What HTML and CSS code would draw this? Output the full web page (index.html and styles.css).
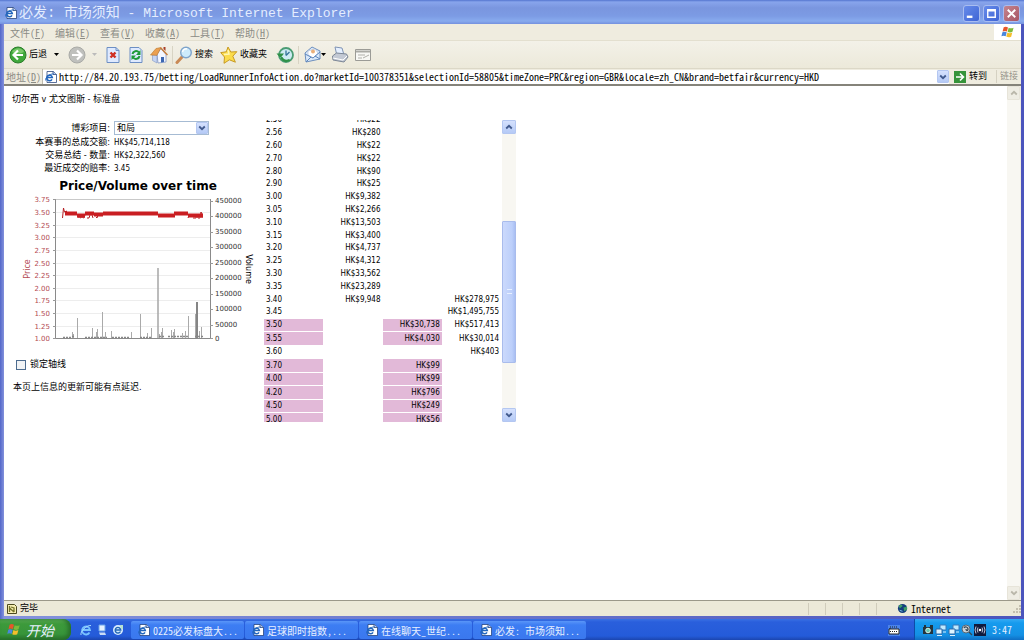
FILE: index.html
```html
<!DOCTYPE html>
<html lang="zh-CN">
<head>
<meta charset="utf-8">
<title>必发: 市场须知 - Microsoft Internet Explorer</title>
<link rel="stylesheet" href="styles.css">
</head>
<body>
<svg class="defs" aria-hidden="true">
  <symbol id="ie" viewBox="0 0 12 12">
    <path d="M2 .5h6.500l3 3v8H2z" fill="#fff" stroke="#16346f" stroke-width=".7"/>
    <path d="M8 .5v3h3.500" fill="#b9cdf3" stroke="#16346f" stroke-width=".7"/>
    <path d="M7 8.300A2.800 2.800 0 1 1 7.300 6.400H2" fill="none" stroke="#2266bd" stroke-width="1.500"/>
    <path d="M.4 9.500C0 6.500 5 2.500 8.500 3" fill="none" stroke="#2266bd" stroke-width=".9"/>
  </symbol>
  <symbol id="flag" viewBox="0 0 16 14">
    <path d="M3 1.500C5 .3 6.500.8 8 1.700L6.700 6.500C5 5.500 3.500 5.500 1.700 6.300z" fill="#e8562a"/>
    <path d="M8.800 2C10.500 3 12.500 3 14.500 2L13.200 6.800C11.300 7.800 9.300 7.600 7.500 6.800z" fill="#7dbb3a"/>
    <path d="M1.500 7.200C3.300 6.300 5 6.500 6.500 7.400L5.300 12C3.700 11 2 11 .3 11.900z" fill="#4a86dc"/>
    <path d="M7.300 7.700C9 8.600 11 8.700 13 7.700L11.700 12.400C9.700 13.400 7.800 13.200 6 12.300z" fill="#f4be2c"/>
  </symbol>
  <symbol id="down" viewBox="0 0 8 6"><path d="M1.200 1.500L4 4.200 6.800 1.500" fill="none" stroke="currentColor" stroke-width="1.800"/></symbol>
  <symbol id="up" viewBox="0 0 8 6"><path d="M1.200 4.500L4 1.800 6.800 4.500" fill="none" stroke="currentColor" stroke-width="1.800"/></symbol>
  <symbol id="net" viewBox="0 0 12 12">
    <path d="M5 1h6v5H5z" fill="#bfe9ff" stroke="#3b78b8"/><path d="M1 5h6v5H1z" fill="#dff5ff" stroke="#2c69a8"/><path d="M2 11.500h5M8 8h3" stroke="#d6efff"/>
  </symbol>
</svg>

<div class="window">
  <header class="titlebar">
    <svg class="i12"><use href="#ie"/></svg>
    <h1><span class="cjk">必发: 市场须知</span> - Microsoft Internet Explorer</h1>
    <div class="winbtns">
      <button aria-label="最小化"><svg viewBox="0 0 16 16"><path d="M3 11.500h6" stroke="#fff" stroke-width="2.500"/></svg></button>
      <button aria-label="最大化"><svg viewBox="0 0 16 16"><path d="M4 4h8v8H4zM4 5h8" stroke="#fff" stroke-width="1.500" fill="none"/></svg></button>
      <button class="close" aria-label="关闭"><svg viewBox="0 0 16 16"><path d="M4 4l8 8M12 4l-8 8" stroke="#fff" stroke-width="2"/></svg></button>
    </div>
  </header>

  <div class="chrome">
    <nav class="menubar">
      <button>文件(<u>F</u>)</button><button>编辑(<u>E</u>)</button><button>查看(<u>V</u>)</button><button>收藏(<u>A</u>)</button><button>工具(<u>T</u>)</button><button>帮助(<u>H</u>)</button>
      <div class="flagbox"><svg><use href="#flag"/></svg></div>
    </nav>

    <div class="toolbar">
      <button class="back"><svg class="i18" viewBox="0 0 18 18"><circle cx="9" cy="9" r="8" fill="#3fa83b" stroke="#2b7d2b"/><path d="M3 6C6 1 13 1 15 6 11 8 7 8 3 6z" fill="#92d57f" opacity=".7"/><path d="M14 9H5M9 4.500L4.500 9 9 13.500" fill="none" stroke="#fff" stroke-width="2.200"/></svg>后退<svg class="tri" viewBox="0 0 5 3"><path d="M0 0h5L2.500 3z"/></svg></button>
      <button class="fwd" aria-label="前进"><svg class="i18" viewBox="0 0 18 18"><circle cx="9" cy="9" r="8" fill="#bfc0bd" stroke="#a9aaa6"/><path d="M4 9h9M9 4.500L13.500 9 9 13.500" fill="none" stroke="#fff" stroke-width="2.200"/></svg><svg class="tri dim" viewBox="0 0 5 3"><path d="M0 0h5L2.500 3z"/></svg></button>
      <button aria-label="停止"><svg class="i18" viewBox="0 0 18 18"><path d="M3 1.500h9l3 3v12H3z" fill="#dfeaff" stroke="#6d8fc4"/><path d="M12 1.500v3h3" fill="none" stroke="#6d8fc4"/><path d="M6.500 6.500l5 5M11.500 6.500l-5 5" stroke="#cf2f22" stroke-width="2.400"/></svg></button>
      <button aria-label="刷新"><svg class="i18" viewBox="0 0 18 18"><path d="M3 1.500h9l3 3v12H3z" fill="#dfeaff" stroke="#6d8fc4"/><path d="M5.500 8C6 5 10 4 12 6.500M12.500 10C12 13 8 14 6 11.500" fill="none" stroke="#1e9a38" stroke-width="2"/><path d="M13.500 4v5H9zM4.500 14V9.500H9z" fill="#1e9a38"/></svg></button>
      <button class="home" aria-label="主页"><svg class="i18" viewBox="0 0 18 18"><path d="M7 8l4-5.500 5 6V16l-8 1z" fill="#f4f7ff" stroke="#8095c5" stroke-width=".8"/><path d="M2.500 9L7 9v8l-4.500-2.500z" fill="#c5d4f3" stroke="#8095c5" stroke-width=".6"/><path d="M.5 9L6 2.500l5-1L7 9.300z" fill="#eba050" stroke="#b9752d" stroke-width=".6"/><path d="M10.500 1.700L17.500 9" stroke="#c67c39" stroke-width="1.500"/><path d="M11 11h3v5l-3 .5z" fill="#3c67b1"/><path d="M13.500 1h2v4l-2-2z" fill="#a83f27"/></svg></button>
      <button class="search"><svg class="i18" viewBox="0 0 18 18"><path d="M7 11L2 16.500" stroke="#c98a56" stroke-width="3" stroke-linecap="round"/><circle cx="11" cy="6.500" r="5.300" fill="#cdebfc" stroke="#7fa4cb" stroke-width="1.400"/><path d="M7.500 6C8 3.500 10 2.500 12 3" stroke="#fff" stroke-width="1.500" fill="none"/></svg>搜索</button>
      <button class="fav"><svg class="i18" viewBox="0 0 18 18"><path d="M8 1l2.800 5 6-.3-4 4.500 2.600 6-6-2.400L4 17.300l.5-6.300L.7 6.600l5.600-.8z" fill="#fbdc4c" stroke="#c89a24"/><path d="M8 4l1 4-5 .5" fill="none" stroke="#fff6b5" stroke-width="1.500"/></svg>收藏夹</button>
      <button class="hist" aria-label="历史"><svg class="i18" viewBox="0 0 18 18"><circle cx="10" cy="9" r="7" fill="#cdebf3" stroke="#4a9c74" stroke-width="1.800"/><path d="M10 9.500V4.500M10 9.500l3.500-3.500" fill="none" stroke="#33739a" stroke-width="1.300"/><path d="M.5 7.500h7.500L4.500 12zM4 11C6 16.500 11 17 14.500 14.500L13 13C10 14.500 8 13.500 6.500 11z" fill="#2f9147"/></svg></button>
      <button class="mail" aria-label="邮件"><svg class="i18" viewBox="0 0 18 18"><path d="M2 7l7-6 8 4v8L3 16z" fill="#d8e8fa" stroke="#6d8fbd"/><path d="M5 5l7-2 3 4-5 5-5-3z" fill="#fff" stroke="#b9c6dc" stroke-width=".7"/><path d="M2 8l8 4 7-6M3 16l5-5M17 13l-5-3" fill="none" stroke="#5c86bd"/><circle cx="10" cy="5.500" r="2" fill="#eab07b"/></svg><svg class="tri" viewBox="0 0 5 3"><path d="M0 0h5L2.500 3z"/></svg></button>
      <button aria-label="打印"><svg class="i18" viewBox="0 0 18 18"><path d="M4 1l7 1 2 7-7 1z" fill="#e6f0ff" stroke="#8094b5"/><path d="M1.500 10l4-3 10 1 1.500 3-4 5-11-2z" fill="#c3c9d4" stroke="#7c8796"/><path d="M2 12l10 2 4-4" fill="none" stroke="#fff"/></svg></button>
      <button class="edit" aria-label="编辑"><svg class="i18" viewBox="0 0 18 18"><path d="M1.500 3.500h15v11h-15z" fill="#f8f8f5" stroke="#9b9b96"/><path d="M2 5.500h14" stroke="#aaaaa5" stroke-width="2"/><path d="M4 9h7M4 12h4M9 12l6-3" stroke="#b0b0ab"/></svg></button>
    </div>

    <form class="addressbar">
      <label for="url">地址(<u>D</u>)</label>
      <div class="urlbox">
        <svg class="i12"><use href="#ie"/></svg>
        <input id="url" type="text" value="http://84.20.193.75/betting/LoadRunnerInfoAction.do?marketId=100378351&amp;selectionId=58805&amp;timeZone=PRC&amp;region=GBR&amp;locale=zh_CN&amp;brand=betfair&amp;currency=HKD">
        <button type="button" class="drop" aria-label="展开"><svg><use href="#down"/></svg></button>
      </div>
      <button type="button" class="go"><svg viewBox="0 0 12 12"><path d="M0 0h12v12H0z" fill="#36943b"/><path d="M2 6h7M6 2.500L9.500 6 6 9.500" fill="none" stroke="#fff" stroke-width="1.600"/></svg>转到</button>
      <a class="links" href="#">链接</a>
    </form>
  </div>

  <div class="viewport">
    <main class="page">
      <h2>切尔西 v 尤文图斯 - 标准盘</h2>
      <div class="columns">
        <section class="info">
          <dl>
            <dt><label for="sel">博彩项目:</label></dt>
            <dd><span class="pick"><select id="sel"><option>和局</option></select><span class="arrow"><svg><use href="#down"/></svg></span></span></dd>
            <dt>本赛事的总成交额:</dt><dd>HK$45,714,118</dd>
            <dt>交易总结 - 数量:</dt><dd>HK$2,322,560</dd>
            <dt>最近成交的赔率:</dt><dd>3.45</dd>
          </dl>
          <svg class="chart" viewBox="0 0 246 172" role="img" aria-label="Price/Volume over time">
            <text class="ctitle" x="126" y="15" text-anchor="middle">Price/Volume over time</text>
            <path d="M44 37.500h154M44 50.500h154M44 62.500h154M44 75.500h154M44 88.500h154M44 100.500h154M44 113.500h154M44 125.500h154M44 138.500h154M44 151.500h154" stroke="#ededed"/>
            <path d="M43.500 24.500H198.500" stroke="#c9c9c9"/>
            <path d="M43.500 24v139.500h155V24" fill="none" stroke="#8a8a8a"/>
            <path d="M41 24.500h3M41 37.500h3M41 50.500h3M41 62.500h3M41 75.500h3M41 88.500h3M41 100.500h3M41 113.500h3M41 125.500h3M41 138.500h3M41 151.500h3M41 163.500h3M198 26.500h3M198 41.500h3M198 57.500h3M198 72.500h3M198 88.500h3M198 103.500h3M198 119.500h3M198 134.500h3M198 150.500h3M198 163.500h3" stroke="#999"/>
            <path d="M65.500 163v-20M90.500 163v-26M128.500 163v-24M176.500 163v-22M139.500 163v-10M80.500 163v-10M84.500 163v-6M85.500 163v-9M60.500 163v-6M61.500 163v-4M93.500 163v-6M99.500 163v-7M119.500 163v-6M135.500 163v-5M147.500 163v-4M149.500 163v-6M150.500 163v-10M159.500 163v-8M161.500 163v-6M162.500 163v-9M170.500 163v-5M173.500 163v-7M187.500 163v-7M189.500 163v-11" stroke="#aaa"/>
            <path d="M146 163V93" stroke="#a6a6a6" stroke-width="1.500"/>
            <path d="M185 163v-36" stroke="#858585" stroke-width="2"/><path d="M183.500 163v-24" stroke="#aaa"/>
            <path d="M51 162.500h8M60 161.500h3M73 162.500h22M100 162.500h18M128 162.500h12M147 161.500h5M156 161.500h11M168 161.500h8M183 161.500h9" stroke="#888" stroke-width="1.500" stroke-dasharray="2 1"/>
            <path d="M50.500 43l1-10 1 4 2-1v3M66 43l1-3 1 3 2-1 2 1 1-3M75 43h2l1-3M79 37l2 6M84 42l1 1 1-3M176 43l1-3M181 43h3l1-4 1 4h2l1-6 1 2v4" fill="none" stroke="#b51f23" stroke-width="1"/>
            <path d="M53 38.500h12M65 40.500h8M73 38.500h9M82 39.500h9M91 38.500h55M146 40.500h17M162 38.500h14M176 40.500h15" fill="none" stroke="#c91e22" stroke-width="4"/>
            <g class="price" text-anchor="end">
              <text x="38" y="27">3.75</text><text x="38" y="40">3.50</text><text x="38" y="53">3.25</text><text x="38" y="65">3.00</text><text x="38" y="78">2.75</text><text x="38" y="91">2.50</text><text x="38" y="103">2.25</text><text x="38" y="116">2.00</text><text x="38" y="128">1.75</text><text x="38" y="141">1.50</text><text x="38" y="154">1.25</text><text x="38" y="166">1.00</text>
            </g>
            <g class="vol">
              <text x="203" y="28">450000</text><text x="203" y="43">400000</text><text x="203" y="59">350000</text><text x="203" y="74">300000</text><text x="203" y="90">250000</text><text x="203" y="105">200000</text><text x="203" y="121">150000</text><text x="203" y="136">100000</text><text x="203" y="152">50000</text><text x="203" y="166">0</text>
            </g>
            <text class="axis price" transform="translate(18 94) rotate(-90)" text-anchor="middle">Price</text>
            <text class="axis" transform="translate(234 94) rotate(90)" text-anchor="middle">Volume</text>
          </svg>
          <label class="lock"><input type="checkbox">锁定轴线</label>
          <p>本页上信息的更新可能有点延迟.</p>
        </section>

        <section class="ladder">
          <div class="rows">
            <table>
              <tbody class="low">
                <tr><td>2.50<td>HK$22<td><td></tr>
                <tr><td>2.56<td>HK$280<td><td></tr>
                <tr><td>2.60<td>HK$22<td><td></tr>
                <tr><td>2.70<td>HK$22<td><td></tr>
                <tr><td>2.80<td>HK$90<td><td></tr>
                <tr><td>2.90<td>HK$25<td><td></tr>
                <tr><td>3.00<td>HK$9,382<td><td></tr>
                <tr><td>3.05<td>HK$2,266<td><td></tr>
                <tr><td>3.10<td>HK$13,503<td><td></tr>
                <tr><td>3.15<td>HK$3,400<td><td></tr>
                <tr><td>3.20<td>HK$4,737<td><td></tr>
                <tr><td>3.25<td>HK$4,312<td><td></tr>
                <tr><td>3.30<td>HK$33,562<td><td></tr>
                <tr><td>3.35<td>HK$23,289<td><td></tr>
                <tr><td>3.40<td>HK$9,948<td><td>HK$278,975</tr>
                <tr><td>3.45<td><td><td>HK$1,495,755</tr>
              </tbody>
              <tbody class="high">
                <tr class="lay"><td>3.50<td><td>HK$30,738<td>HK$517,413</tr>
                <tr class="lay"><td>3.55<td><td>HK$4,030<td>HK$30,014</tr>
                <tr><td>3.60<td><td><td>HK$403</tr>
                <tr class="lay"><td>3.70<td><td>HK$99<td></tr>
                <tr class="lay"><td>4.00<td><td>HK$99<td></tr>
                <tr class="lay"><td>4.20<td><td>HK$796<td></tr>
                <tr class="lay"><td>4.50<td><td>HK$249<td></tr>
                <tr class="lay"><td>5.00<td><td>HK$56<td></tr>
              </tbody>
            </table>
          </div>
          <div class="scroll">
            <button aria-label="向上"><svg><use href="#up"/></svg></button>
            <div class="track"><div class="thumb"><i></i></div></div>
            <button aria-label="向下"><svg><use href="#down"/></svg></button>
          </div>
        </section>
      </div>
    </main>
    <div class="scroll off">
      <button disabled aria-label="向上"><svg><use href="#up"/></svg></button>
      <div class="track"></div>
      <button disabled aria-label="向下"><svg><use href="#down"/></svg></button>
    </div>
  </div>

  <footer class="status">
    <svg class="i12" viewBox="0 0 12 12"><path d="M1.500 1.500h7l2 2v7h-9z" fill="#f5edb0" stroke="#4c4a1e"/><path d="M3.500 3v6M3.500 5L8 9M5 4l3 1v4" fill="none" stroke="#77742a" stroke-width="1.300"/></svg>
    <span class="done">完毕</span>
    <span class="cell"></span><span class="cell"></span><span class="cell"></span><span class="cell"></span><span class="cell"></span>
    <span class="zone"><svg viewBox="0 0 12 12"><circle cx="6" cy="6" r="5" fill="#123d7c"/><path d="M2 3c2-2 4-1 4 0S4 5 3 6zM7 5l4-1v3L8 9z" fill="#3fa066"/><path d="M3 8l3 1" stroke="#84c4ed"/></svg>Internet</span>
    <svg class="grip" viewBox="0 0 8 8"><path d="M6 0h2v2H6zM3 3h2v2H3zM6 3h2v2H6zM0 6h2v2H0zM3 6h2v2H3zM6 6h2v2H6z" fill="#c4bfae"/></svg>
  </footer>
</div>

<div class="taskbar">
  <button class="start"><svg><use href="#flag"/></svg>开始</button>
  <div class="quick">
    <button aria-label="Internet Explorer"><svg viewBox="0 0 12 12"><path d="M9.500 8.500A4 4 0 1 1 10 6H3" fill="none" stroke="#78c3ff" stroke-width="1.800"/><path d="M1 11C0 8 6 1 11 1.500" fill="none" stroke="#a9dcff"/></svg></button>
    <button aria-label="显示桌面"><svg viewBox="0 0 12 12"><path d="M3 1h6v6H3z" fill="#e5f1ff" stroke="#6aa3e8"/><path d="M3 8.500h6l1 2.500H4z" fill="#c8dcf5"/></svg></button>
    <button aria-label="浏览器"><svg viewBox="0 0 12 12"><circle cx="6" cy="6" r="5" fill="#d8ecff"/><path d="M8.500 7.500A2.800 2.800 0 1 1 8.800 6H4" fill="none" stroke="#2367b5" stroke-width="1.400"/><path d="M8 1h3v4H9z" fill="#b8e3cf"/></svg></button>
  </div>
  <nav class="tasks">
    <button><svg class="i12"><use href="#ie"/></svg>0225必发标盘大...</button>
    <button><svg class="i12"><use href="#ie"/></svg>足球即时指数,...</button>
    <button><svg class="i12"><use href="#ie"/></svg>在线聊天_世纪...</button>
    <button><svg class="i12"><use href="#ie"/></svg>必发: 市场须知...</button>
  </nav>
  <button class="lang" aria-label="输入法"><svg viewBox="0 0 12 12"><path d="M0 1h12v11H0z" fill="#4a83ea"/><path d="M1 5h10v5H1z" fill="#fff" stroke="#222"/><path d="M2 7.500h8M2 5V3h8" stroke="#222" stroke-dasharray="1 1" fill="none"/></svg></button>
  <div class="tray">
    <svg viewBox="0 0 12 12"><path d="M1 3h10v7H1z" fill="#24343d"/><circle cx="6" cy="6.500" r="2.300" fill="#6bcab2" stroke="#d8f3ea"/><path d="M2 2h2M8 2h3" stroke="#24343d" stroke-width="2"/></svg>
    <svg><use href="#net"/></svg>
    <svg><use href="#net"/></svg>
    <svg viewBox="0 0 12 12"><circle cx="5" cy="5" r="4" fill="#cbd3d7" stroke="#576877"/><path d="M3 4c1-2 4-1 4 1S5 7 5 5M8 8l3 3" fill="none" stroke="#344654" stroke-width="1.300"/></svg>
    <svg viewBox="0 0 12 12"><path d="M0 0h12v12H0z" fill="#101a3d"/><circle cx="6" cy="6" r="1.300" fill="#fff"/><path d="M4 3.500Q2.500 6 4 8.500M8 3.500q1.500 2.500 0 5M2 2.500Q0 6 2 9.500M10 2.500q2 3.500 0 7" fill="none" stroke="#e8edff" stroke-width=".8"/></svg>
    <time>3:47</time>
  </div>
</div>
</body>
</html>
```
FILE: styles.css
```css
* { box-sizing: border-box; }
body {
  margin: 0;
  height: 100vh;
  display: flex;
  flex-direction: column;
  overflow: hidden;
  background: #fff;
  color: #000;
  font: 9px/13px "DejaVu Sans Condensed", "Noto Sans CJK SC", sans-serif;
}
button {
  border: 0;
  padding: 0;
  background: none;
  font: inherit;
  color: inherit;
  display: flex;
  align-items: center;
}
svg { display: block; flex: none; }
.defs { position: absolute; width: 0; height: 0; }
.i12 { width: 12px; height: 12px; }
.i18 { width: 18px; height: 18px; }
u { text-decoration-thickness: 1px; }

/* system interface text: half-width Latin beside full-width Chinese */
.menubar button, .addressbar label, .urlbox input, .zone, .tasks button, .tray time {
  font: 10px/15px "Noto Sans CJK SC", sans-serif;
  font-feature-settings: "hwid";
}

.window {
  flex: 1;
  min-height: 0;
  display: flex;
  flex-direction: column;
  padding: 0 3px 3px 4px;
  background: linear-gradient(90deg, #5367c9, #8492dc 4px, #4b55bd);
}
.titlebar {
  height: 24px;
  margin: 0 -3px 0 -4px;
  padding: 2px 4px 0 5px;
  display: flex;
  align-items: center;
  gap: 2px;
  background: linear-gradient(#5475cf, #88a5ec 2px, #7a96df 8px, #7c9be4 16px, #88abee 21px, #7591de);
  color: #e4edff;
}
.titlebar h1 {
  flex: 1;
  margin: 0;
  font: 13px/20px "Liberation Mono", "Noto Sans CJK SC", monospace;
  white-space: pre;
}
.titlebar .cjk { font-size: 14px; }
.winbtns { display: flex; gap: 3px; }
.winbtns button {
  width: 17px;
  height: 17px;
  border: 1px solid #a9bdf0;
  border-radius: 3px;
  background: linear-gradient(135deg, #668bea, #3f65d5);
}
.winbtns .close { background: linear-gradient(135deg, #c4848e, #a85765); }

.chrome { background: #efecdf; }
.menubar {
  height: 17px;
  display: flex;
  align-items: center;
  gap: 10px;
  padding-left: 6px;
  border-bottom: 1px solid #e3dfcf;
  color: #8b8b85;
}
.flagbox {
  margin-left: auto;
  width: 27px;
  height: 16px;
  background: #fff;
  display: flex;
  align-items: center;
  justify-content: center;
}
.flagbox svg { width: 14px; height: 12px; }

.toolbar {
  height: 28px;
  display: flex;
  align-items: center;
  gap: 5px;
  padding-left: 5px;
  border-bottom: 1px solid #dcd8c7;
  background: linear-gradient(#f3f1e8, #ece9da);
}
.toolbar button { gap: 2px; }
.tri { width: 5px; height: 3px; }
.tri.dim { fill: #bbb; }
.toolbar .back { margin-right: 4px; }
.back .tri { margin-left: 5px; }
.toolbar .fwd { gap: 6px; margin-right: 2px; }
.toolbar .search { border-left: 1px solid #d8d4c4; padding-left: 2px; }
.toolbar .search, .toolbar .mail { margin-left: -1px; }
.toolbar .fav { margin-left: 2px; }
.toolbar .hist { margin-left: 4px; }
.toolbar .mail { border-left: 1px solid #d8d4c4; padding-left: 4px; gap: 0; }

.addressbar {
  height: 17px;
  display: flex;
  align-items: center;
  border-bottom: 2px solid #85837a;
  color: #8b8b85;
}
.addressbar label { width: 39px; padding-left: 2px; border-right: 1px solid #bfbbae; white-space: nowrap; }
.urlbox { flex: 1; display: flex; align-items: center; height: 14px; background: #fff; padding-left: 2px; }
.urlbox input {
  flex: 1;
  min-width: 0;
  height: 14px;
  border: 0;
  padding: 0 0 0 2px;
  outline: 0;
  background: none;
  color: #000;
}
.drop, .scroll button, .arrow {
  justify-content: center;
  background: linear-gradient(#d5e1fd, #b5caf6);
  border: 1px solid #b4c7f1;
  border-radius: 1px;
  color: #40598c;
}
.drop { width: 12px; height: 13px; }
.drop svg, .scroll svg, .arrow svg { width: 8px; height: 6px; }
.go { color: #000; gap: 3px; padding: 0 5px; border-right: 1px solid #d5d1c2; width: 48px; }
.go svg { width: 12px; height: 12px; }
.links { width: 24px; padding-left: 3px; color: #96948b; text-decoration: none; white-space: nowrap; }

.viewport { flex: 1; min-height: 0; display: flex; background: #fff; }
.page { flex: 1; padding: 7px 8px; min-width: 0; }
.page h2 { margin: 0 0 14px; font-size: 9px; line-height: 13px; font-weight: 400; }
.columns { display: flex; }
.info { width: 252px; }
dl {
  margin: 0;
  display: grid;
  grid-template-columns: 98px 1fr;
  column-gap: 4px;
  grid-template-rows: 16px;
  grid-auto-rows: 13px;
  align-items: center;
}
dt { text-align: right; white-space: nowrap; }
dd { margin: 0; font-size: 8px; }
.pick { position: relative; display: block; width: 95px; height: 14px; }
.pick select {
  appearance: none;
  display: block;
  width: 100%;
  height: 14px;
  padding: 0 2px;
  border: 1px solid #a6bbd3;
  border-radius: 0;
  background: #fff;
  color: #000;
  font: 9px/12px "Noto Sans CJK SC", sans-serif;
}
.arrow {
  position: absolute;
  top: 1px;
  right: 1px;
  width: 12px;
  height: 12px;
  display: flex;
  align-items: center;
  pointer-events: none;
}
.chart { width: 246px; height: 172px; font-family: "DejaVu Sans", sans-serif; font-size: 7px; }
.ctitle { font-size: 12px; font-weight: 700; }
.price { fill: #b34a52; }
.vol { fill: #333; }
.axis { font-size: 8px; }
.lock { display: flex; align-items: center; gap: 4px; margin: 11px 0 10px 4px; }
.lock input {
  appearance: none;
  width: 10px;
  height: 10px;
  margin: 0;
  border: 1px solid #4d6c8f;
  background: #f1f3f5;
}
.info p { margin: 0 0 0 1px; }

.ladder { display: flex; height: 302px; gap: 1px; }
.rows { overflow: hidden; height: 100%; }
table {
  width: 237px;
  margin-top: -7px;
  table-layout: fixed;
  border-collapse: collapse;
  font-size: 8px;
  line-height: 11px;
}
td { padding: 0 2px; text-align: right; border-bottom: 1px solid #fff; background-clip: padding-box; }
td:first-child { text-align: left; }
tr { height: 13px; }
.low tr:nth-child(5n) { height: 12px; }
.high tr:nth-child(even) { height: 14px; }
.lay td:nth-child(odd) { background-color: #e2b9d8; }

.scroll { width: 14px; display: flex; flex-direction: column; background: #f8f7f2; }
.scroll button { height: 14px; width: 14px; }
.track { flex: 1; display: flex; flex-direction: column; }
.thumb {
  margin: auto 0;
  height: 142px;
  border: 1px solid #a9bcec;
  border-radius: 1px;
  background: linear-gradient(90deg, #cbd9fc, #bccffa 9px, #a9bff3);
  display: flex;
  align-items: center;
  justify-content: center;
}
.ladder .track { padding-top: 41px; }
.thumb i { width: 5px; height: 5px; border: solid #e8f0ff; border-width: 1px 0; }
.viewport > .scroll { border-right: 1px solid #f0ede2; }
.off button { background: #efede4; border-color: #e7e4d9; color: #bab7aa; width: 13px; }

.status {
  height: 16px;
  display: flex;
  align-items: center;
  padding-left: 2px;
  border-top: 1px solid #9b9889;
  background: #ece9d8;
}
.done { flex: 1; padding-left: 2px; }
.cell { width: 17px; height: 12px; border-left: 1px solid #d0ccbb; }
.zone {
  width: 120px;
  padding-left: 4px;
  display: flex;
  align-items: center;
  gap: 3px;
}
.zone svg { width: 11px; height: 11px; }
.grip { width: 8px; height: 8px; }

.taskbar {
  height: 21px;
  display: flex;
  background: linear-gradient(#3a71e4, #2a5fdc 3px, #245bd9 17px, #1b45af);
  color: #e8f0ff;
}
.start {
  width: 71px;
  padding-left: 7px;
  gap: 5px;
  border-radius: 0 8px 8px 0;
  background: linear-gradient(#5cae58, #3d9a3b 5px, #37943a 15px, #27702a);
  box-shadow: inset -3px 0 4px #276e2b;
  font: italic 14px/20px "Noto Sans CJK SC", sans-serif;
}
.start svg { width: 14px; height: 13px; }
.quick { display: flex; gap: 4px; padding: 0 7px 0 9px; }
.quick svg { width: 12px; height: 12px; }
.tasks { flex: 1; display: flex; gap: 1px; padding: 2px 0 1px; min-width: 0; }
.tasks button {
  width: 113px;
  padding-left: 7px;
  border-radius: 2px;
  background: linear-gradient(#5a96f8, #3d7df3 4px, #3a78ee);
  white-space: pre;
}
.tasks .i12 { margin-right: 3px; }
.lang { padding-right: 14px; }
.lang svg { width: 12px; height: 12px; }
.tray {
  display: flex;
  align-items: center;
  gap: 1px;
  padding: 0 12px 0 7px;
  width: 110px;
  background: linear-gradient(#36aaf3, #169bee 4px, #1490e4 16px, #0f6fc4);
  border-left: 1px solid #0d4ca8;
}
.tray svg { width: 12px; height: 12px; }
.tray time { margin-left: auto; }
```
